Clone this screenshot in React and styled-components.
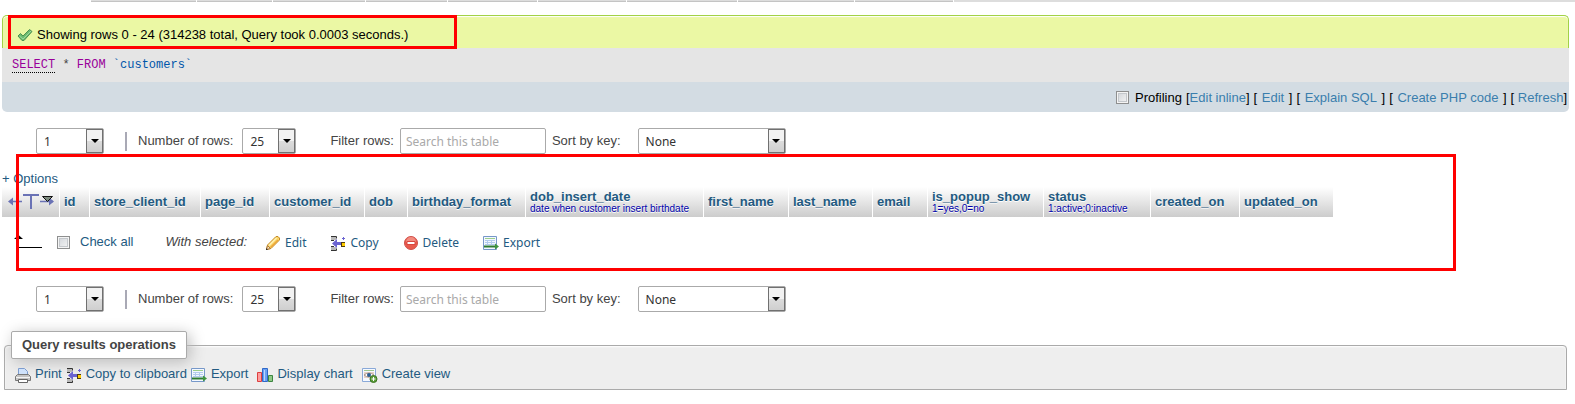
import React from 'react';
import styled, { createGlobalStyle } from 'styled-components';

const GlobalStyle = createGlobalStyle`
  * {
    box-sizing: border-box;
  }

  body {
    margin: 0;
    background: #fff;
    color: #444;
    font: 13px/16px 'Liberation Sans', Arial, sans-serif;
  }
`;

/* ---------- layout ---------- */

const TabStrip = styled.nav`
  display: flex;
  gap: 1px;
  height: 2px;
  padding-left: 91px;
`;

const Tab = styled.span`
  width: ${(props) => props.$width}px;
  flex: ${(props) => (props.$width ? 'none' : 1)};
  background: #ddd;
  border-bottom: 1px solid ${(props) => (props.$width ? '#c4c4c4' : '#ddd')};
`;

const Page = styled.main`
  padding: 13px 6px 14px 2px;
`;

const Highlight = styled.div`
  position: absolute;
  top: ${(props) => props.$top}px;
  left: ${(props) => props.$left}px;
  width: ${(props) => props.$width}px;
  height: ${(props) => props.$height}px;
  border: 3px solid #f00;
  pointer-events: none;
`;

/* ---------- query result message ---------- */

const Success = styled.div`
  position: relative;
  display: flex;
  align-items: center;
  gap: 4px;
  height: 33px;
  padding: 6px 14px 0;
  border: 1px solid #a2d246;
  border-bottom: 0;
  border-radius: 5px 5px 0 0;
  background: #ebf8a4;
  box-shadow: inset 0 1px 1px #fff;
  color: #000;
`;

const SqlCode = styled.pre`
  height: 34px;
  margin: 0;
  padding: 9px 10px;
  background: #e5e5e5;
  color: #444;
  font: 12px/16px 'Liberation Mono', 'Courier New', monospace;
`;

const Keyword = styled.span`
  color: #909;
  border-bottom: ${(props) => (props.$doc ? '1px dotted #000' : '0')};
`;

const Identifier = styled.span`
  color: #05a;
`;

const Tools = styled.div`
  display: flex;
  justify-content: flex-end;
  align-items: center;
  gap: 4px;
  height: 30px;
  padding: 1px 2px 0 0;
  border-radius: 0 0 5px 5px;
  background: #d3dce3;
  color: #000;
`;

const Link = styled.a`
  color: #235a81;
  text-decoration: none;
`;

const ToolLink = styled(Link)`
  margin: 0 ${(props) => (props.$after ? 1 : 0)}px 0 ${(props) => (props.$before ? 1 : 0)}px;
  color: #3a7ead;
`;

const Checkbox = styled.input.attrs({ type: 'checkbox' })`
  appearance: none;
  width: 13px;
  height: 13px;
  margin: 0;
  border: 1px solid #8e8f8f;
  background: linear-gradient(135deg, #cfd3d8, #f6f6f6);
  box-shadow: inset 0 0 0 1px #f4f4f4, inset 0 0 0 2px #c4c8cc;
`;

const Profiling = styled.label`
  display: flex;
  align-items: center;
  gap: 6px;
`;

/* ---------- navigation ---------- */

const Navigation = styled.form`
  display: flex;
  align-items: center;
  height: 26px;
  margin-top: ${(props) => props.$top}px;
  padding-left: 34px;
`;

const Divider = styled.span`
  width: 2px;
  height: 19px;
  margin: 0 11px 0 21px;
  background: #a9a9b5;
`;

const Field = styled.label`
  display: flex;
  align-items: center;
  gap: ${(props) => props.$gap}px;
  margin-right: ${(props) => props.$after || 0}px;
  white-space: nowrap;
`;

const SelectBox = styled.span`
  position: relative;
  display: inline-flex;
  width: ${(props) => props.$width}px;
  height: 26px;
`;

const Select = styled.select`
  appearance: none;
  width: 100%;
  padding: 0 20px 0 7px;
  border: 1px solid #aaa;
  border-radius: 2px;
  background: #fff;
  color: #333;
  font: 12px 'Noto Sans', 'Open Sans', sans-serif;
`;

const Arrow = styled.span`
  position: absolute;
  top: 1px;
  right: 1px;
  bottom: 1px;
  display: flex;
  align-items: center;
  justify-content: center;
  width: 17px;
  border: 1px solid #707070;
  background: linear-gradient(#f2f2f2 50%, #dcdcdc 50%, #cfcfcf);
  pointer-events: none;
`;

const SearchInput = styled.input`
  width: 146px;
  height: 26px;
  padding: 0 5px;
  border: 1px solid #aaa;
  border-radius: 2px;
  background: #fff;
  font: 12px 'Noto Sans', 'Open Sans', sans-serif;

  &::placeholder {
    color: #a9a9a9;
    opacity: 1;
  }
`;

/* ---------- results table ---------- */

const Results = styled.section`
  position: relative;
  padding-top: 17px;
`;

const ResultsTable = styled.table`
  border-spacing: 0;
  table-layout: fixed;
  width: 1332px;
`;

const HeadCell = styled.th`
  width: ${(props) => props.$width}px;
  height: 30px;
  padding: 0 0 0 4px;
  border-right: 1px solid #fff;
  background: linear-gradient(#fff, #ccc);
  color: #235a81;
  text-align: left;
  text-shadow: 0 1px 0 #fff;
  line-height: 14px;
  white-space: nowrap;
  vertical-align: middle;

  a {
    color: inherit;
    text-decoration: none;
  }
`;

const Comment = styled.span`
  display: block;
  color: #00a;
  font-size: 10px;
  font-weight: normal;
  line-height: 10px;
`;

const DirectionIcons = styled.span`
  display: flex;
  align-items: center;
  padding-left: 1px;
`;

const BulkActions = styled.div`
  display: flex;
  align-items: center;
  height: 16px;
  margin-top: 17px;
  padding-left: 11px;
`;

const CheckAll = styled.label`
  display: flex;
  align-items: center;
  gap: 10px;
  margin: 0 32px 0 14px;
  color: #235a81;
`;

const ActionButton = styled.button`
  display: flex;
  align-items: center;
  gap: 4px;
  margin: 1px 0 0 ${(props) => props.$before}px;
  padding: 0;
  border: 0;
  background: none;
  color: #235a81;
  font: 12px/16px 'Noto Sans', 'Open Sans', sans-serif;
`;

/* ---------- query results operations ---------- */

const Operations = styled.fieldset`
  margin: 19px 2px 0 2px;
  padding: 7px 10px 6px;
  border: 1px solid #aaa;
  border-radius: 4px 4px 0 0;
  background: #eee;
  box-shadow: inset 0 1px 2px #fff;
`;

const Legend = styled.legend`
  margin-left: -4px;
  padding: 5px 10px;
  border: 1px solid #aaa;
  border-radius: 2px;
  background: #fff;
  box-shadow: 3px 3px 15px #bbb;
  color: #444;
  font-weight: bold;
`;

const OperationList = styled.div`
  position: relative;
  display: flex;
  gap: 4px;
`;

const Operation = styled(Link)`
  display: flex;
  gap: 4px;
  height: 17px;
  margin-left: ${(props) => props.$before || 0}px;

  svg {
    margin-top: 1px;
  }
`;

/* ---------- icons ---------- */

const Svg = styled.svg`
  flex: none;
  fill: none;
`;

const Icon = ({ children, width = 16, height = 16 }) => (
    <Svg width={width} height={height} viewBox={`0 0 ${width} ${height}`} aria-hidden="true">
        {children}
    </Svg>
);

const TickIcon = () => (
    <Icon>
        <path d="M1 9 3.500 6.500 6 9 12.500 2.500 15 4.500 7 13.500H5Z" fill="#6cbb6f" stroke="#4c9150" strokeLinejoin="round" />
        <path d="m2.500 9 3.500 3 8-8" stroke="#9bd99d" />
    </Icon>
);

const PencilIcon = () => (
    <Icon>
        <path d="M1.500 14.500 2.500 10 10.500 2q1.500-1.500 3 0l.5.5q1.500 1.500 0 3L6 13.500Z" fill="#fbd667" stroke="#c48a27" />
        <path d="m4 10.500 7.500-7.500" stroke="#fff2b5" strokeWidth="1.5" />
        <path d="m5.500 12.500 7.500-7.500" stroke="#eda63b" strokeWidth="1.5" />
        <path d="m2.500 10.500 3 3-4 1Z" fill="#f4e2c4" stroke="#b07a34" />
        <path d="M1 13v2h2Z" fill="#333" />
    </Icon>
);

const CopyIcon = () => (
    <Icon>
        <path d="M1 2h5v3H1ZM1 12h5v3H1Z" fill="#b9b9b9" />
        <path d="M1 1.500h5.500v2M1 5.500h3M1 11.500h3M1 15.500h5.500v-2" stroke="#333" />
        <path d="M2 8.500 7 4v3h4v3H7v3Z" fill="#6b63d1" />
        <path d="M11 7h4v5h-4Z" fill="#4d3b10" />
        <path d="M12 8h3v3h-3Z" fill="#fc0" />
        <path d="M12 3.500h3M13.500 2v3" stroke="#6b63d1" />
    </Icon>
);

const DeleteIcon = () => (
    <Icon>
        <circle cx="8" cy="8" r="6.5" fill="#e85a4c" stroke="#d0504a" />
        <path d="M3 7a5 5 0 0 1 10 0Z" fill="#f28c80" />
        <path d="M4 6.500h8v3H4Z" fill="#fff" stroke="#d9473f" />
    </Icon>
);

const ExportIcon = () => (
    <Icon>
        <path d="M.5 1.500h13v13H.5Z" fill="#f3f8ff" stroke="#7798c9" />
        <path d="M2 3.500h10" stroke="#9ccf8c" />
        <path d="M2 5.500h10M2 7.500h10M2 9.500h10M4.500 5v5M8.500 5v5" stroke="#b3cbed" />
        <path d="M1 11.500h12" stroke="#2f7d32" strokeWidth="2" />
        <path d="m12 8.500 4 3-4 3Z" fill="#3f963f" />
    </Icon>
);

const PrintIcon = () => (
    <Icon>
        <path d="M3.500 8V1.500h6l3 3V8" fill="#cfe2fb" stroke="#7d9cce" />
        <path d="M2.500 7.500h11l2 2v4H.5v-4Z" fill="#c4c4c4" stroke="#777" />
        <path d="M1 10.500h14" stroke="#f4f4f4" />
        <path d="M3.500 12.500h9v3h-9Z" fill="#fff" stroke="#666" />
    </Icon>
);

const ChartIcon = () => (
    <Icon>
        <path d="M.5 5.500h4v9h-4Z" fill="#ff9c9c" stroke="#dc3f3f" />
        <path d="M5.500 1.500h5v13h-5Z" fill="#6aa0f2" stroke="#2f68c8" />
        <path d="M7.500 3v11" stroke="#b9d5ff" />
        <path d="M11.500 8.500h4v6h-4Z" fill="#90c987" stroke="#3c8540" />
    </Icon>
);

const ViewIcon = () => (
    <Icon>
        <path d="M.5 1.500h13v13H.5Z" fill="#f5f9ff" stroke="#8aa9d8" />
        <path d="M2 3.500h10" stroke="#9cc78e" />
        <path d="M2 5h10v6H2Z" fill="#e6d3c6" />
        <path d="M2 8q5-4 10 0-5 4-10 0Z" fill="#fff" stroke="#a9948c" />
        <circle cx="7" cy="8" r="2" fill="#2c5f94" />
        <circle cx="11.500" cy="12" r="3.500" fill="#5c9e3b" stroke="#3c7622" />
        <path d="M9.500 12h4M11.500 10v4" stroke="#fff" />
    </Icon>
);

const FullTextIcon = () => (
    <Icon width={47} height={18}>
        <path d="M3 8.500h12M33 8.500h13" stroke="#6a72b5" strokeWidth="1.5" />
        <path d="m1 8.500 5-4v8ZM47 8.500l-5-4v8Z" fill="#6a72b5" />
        <path d="M16 1h16v2H16ZM23 3h2v13h-2Z" fill="#6a72b5" />
        <path d="M35.500 3.500h10l-5 5Z" fill="#7d8a7d" stroke="#111" />
    </Icon>
);

const WithSelectedArrow = () => (
    <Icon width={30} height={16}>
        <path d="M1 5 5.500 1 10 5ZM5 4h1v10H5ZM5 13h24v1H5Z" fill="#000" />
    </Icon>
);

/* ---------- data ---------- */

const tabs = [105, 75, 92, 81, 89, 88, 110, 116, 98];

const columns = [
    { name: 'id', width: 30 },
    { name: 'store_client_id', width: 111 },
    { name: 'page_id', width: 69 },
    { name: 'customer_id', width: 95 },
    { name: 'dob', width: 43 },
    { name: 'birthday_format', width: 118 },
    { name: 'dob_insert_date', width: 178, comment: 'date when customer insert birthdate' },
    { name: 'first_name', width: 85 },
    { name: 'last_name', width: 84 },
    { name: 'email', width: 55 },
    { name: 'is_popup_show', width: 116, comment: '1=yes,0=no' },
    { name: 'status', width: 107, comment: '1:active;0:inactive' },
    { name: 'created_on', width: 89 },
    { name: 'updated_on', width: 94 },
];

const actions = [
    { label: 'Edit', icon: <PencilIcon />, before: 18 },
    { label: 'Copy', icon: <CopyIcon />, before: 24 },
    { label: 'Delete', icon: <DeleteIcon />, before: 24 },
    { label: 'Export', icon: <ExportIcon />, before: 24 },
];

const operations = [
    { label: 'Print', icon: <PrintIcon /> },
    { label: 'Copy to clipboard', icon: <CopyIcon /> },
    { label: 'Export', icon: <ExportIcon /> },
    { label: 'Display chart', icon: <ChartIcon />, before: 5 },
    { label: 'Create view', icon: <ViewIcon />, before: 5 },
];

/* ---------- components ---------- */

const Dropdown = ({ width, value, label }) => (
    <SelectBox $width={width}>
        <Select defaultValue={value} aria-label={label}>
            <option>{value}</option>
        </Select>
        <Arrow>
            <svg width="8" height="4" viewBox="0 0 8 4"><path d="M0 0h8L4 4Z" fill="#000" /></svg>
        </Arrow>
    </SelectBox>
);

const TableNavigation = ({ top }) => (
    <Navigation $top={top}>
        <Dropdown width={68} value="1" label="Page" />
        <Divider />
        <Field $gap={9} $after={34}>
            Number of rows:
            <Dropdown width={54} value="25" />
        </Field>
        <Field $gap={6} $after={6}>
            Filter rows:
            <SearchInput type="text" placeholder="Search this table" />
        </Field>
        <Field $gap={17}>
            Sort by key:
            <Dropdown width={148} value="None" />
        </Field>
    </Navigation>
);

const App = () => {
    return (
        <>
            <GlobalStyle />
            <TabStrip>
                {tabs.map((width, i) => <Tab key={i} $width={width} />)}
                <Tab />
            </TabStrip>
            <Page>
                <Success>
                    <TickIcon />
                    Showing rows 0 - 24 (314238 total, Query took 0.0003 seconds.)
                    <Highlight $top={-1} $left={5} $width={449} $height={34} />
                </Success>
                <SqlCode>
                    <Keyword $doc>SELECT</Keyword> * <Keyword>FROM</Keyword> <Identifier>`customers`</Identifier>
                </SqlCode>
                <Tools>
                    <Profiling><Checkbox />Profiling</Profiling>
                    <span>[<ToolLink href="#inline">Edit inline</ToolLink>]</span>
                    <span>[ <ToolLink $before $after href="#edit">Edit</ToolLink> ]</span>
                    <span>[ <ToolLink $before $after href="#explain">Explain SQL</ToolLink> ]</span>
                    <span>[ <ToolLink $before $after href="#php">Create PHP code</ToolLink> ]</span>
                    <span>[ <ToolLink href="#refresh">Refresh</ToolLink>]</span>
                </Tools>

                <TableNavigation top={16} />

                <Results>
                    <Link href="#options">+ Options</Link>
                    <ResultsTable>
                        <thead>
                            <tr>
                                <HeadCell $width={58}>
                                    <DirectionIcons><FullTextIcon /></DirectionIcons>
                                </HeadCell>
                                {columns.map(({ name, width, comment }) => (
                                    <HeadCell key={name} $width={width}>
                                        <a href={`#${name}`}>{name}</a>
                                        {comment && <Comment>{comment}</Comment>}
                                    </HeadCell>
                                ))}
                            </tr>
                        </thead>
                    </ResultsTable>
                    <BulkActions>
                        <WithSelectedArrow />
                        <CheckAll><Checkbox />Check all</CheckAll>
                        <em>With selected:</em>
                        {actions.map(({ label, icon, before }) => (
                            <ActionButton key={label} type="button" $before={before}>{icon}{label}</ActionButton>
                        ))}
                    </BulkActions>
                    <Highlight $top={0} $left={14} $width={1440} $height={117} />
                </Results>

                <TableNavigation top={36} />

                <Operations>
                    <Legend>Query results operations</Legend>
                    <OperationList>
                        {operations.map(({ label, icon, before }) => (
                            <Operation key={label} href="#operations" $before={before}>{icon}{label}</Operation>
                        ))}
                    </OperationList>
                </Operations>
            </Page>
        </>
    );
};

export default App;
